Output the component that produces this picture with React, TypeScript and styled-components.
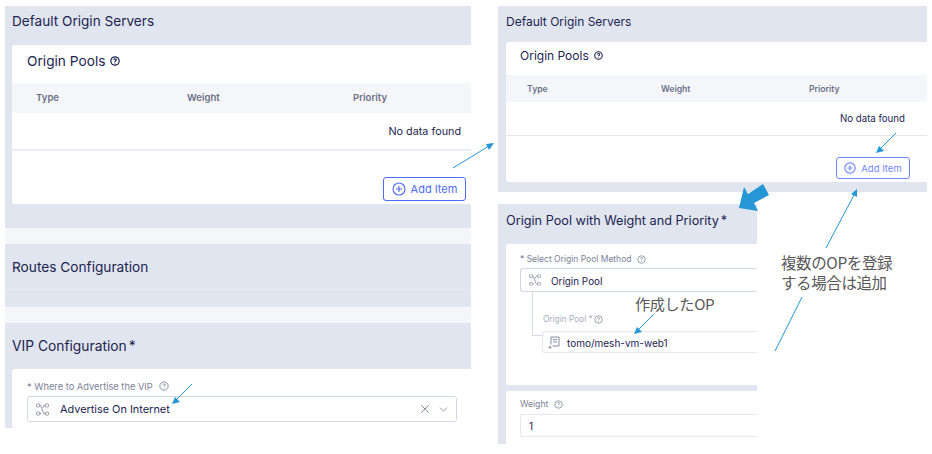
import React from 'react'
import styled, { createGlobalStyle } from 'styled-components'
import { ChevronDown, X } from 'lucide-react'

const LAVENDER = '#e1e5f0'
const INK = '#1c2450'
const BLUE = '#4d6bff'
const ARROW = '#2497d4'

const GlobalStyle = createGlobalStyle`
  html, body {
    margin: 0;
    padding: 0;
    background: #fff;
  }
  body {
    font-family: Inter, "Noto Sans", sans-serif;
    color: ${INK};
  }
`

const Page = styled.div`
  position: relative;
  width: 932px;
  height: 454px;
  overflow: hidden;
  display: flex;
  align-items: flex-start;
  gap: 27px;
  padding: 6px 0 0 5px;
  box-sizing: border-box;
`

const LeftShot = styled.div`
  width: 466px;
  height: 422px;
  display: flex;
  flex-direction: column;
  overflow: hidden;
`

const RightShot = styled.div`
  width: 429px;
  display: flex;
  flex-direction: column;
  gap: 12px;
`

const Band = styled.section<{ $height: number; $pad?: number; $width?: number }>`
  height: ${(p) => p.$height}px;
  width: ${(p) => (p.$width ? `${p.$width}px` : 'auto')};
  background: ${LAVENDER};
  padding-left: ${(p) => p.$pad ?? 7}px;
  box-sizing: border-box;
  flex: none;
  overflow: hidden;
`

const BandRule = styled.div`
  height: 1px;
  margin-left: -7px;
  background: #e8ebf4;
`

const Spacer = styled.div<{ $height: number }>`
  height: ${(p) => p.$height}px;
  background: #f5f6f9;
  flex: none;
`

const BandTitle = styled.h2<{ $size: number; $height: number; $lift: number }>`
  margin: 0;
  font-size: ${(p) => p.$size}px;
  font-weight: 400;
  height: ${(p) => p.$height}px;
  padding-bottom: ${(p) => p.$lift}px;
  box-sizing: border-box;
  display: flex;
  align-items: center;
  color: ${INK};
`

const Star = styled.span`
  margin-left: 2px;
`

const Card = styled.div<{ $height: number; $gap?: number }>`
  height: ${(p) => p.$height}px;
  margin-bottom: ${(p) => p.$gap ?? 0}px;
  background: #fff;
  border-radius: 3px 0 0 3px;
  overflow: hidden;
  position: relative;
  box-sizing: border-box;
`

const CardHead = styled.div<{ $size: number; $height: number; $pad: number; $lift: number }>`
  height: ${(p) => p.$height}px;
  padding: 0 0 ${(p) => p.$lift}px ${(p) => p.$pad}px;
  box-sizing: border-box;
  display: flex;
  align-items: center;
  gap: 5px;
  font-size: ${(p) => p.$size}px;
`

const TableHead = styled.div<{ $height: number; $size: number; $columns: string; $lift?: number }>`
  height: ${(p) => p.$height}px;
  padding-bottom: ${(p) => p.$lift ?? 0}px;
  box-sizing: border-box;
  background: #f5f6f9;
  display: grid;
  grid-template-columns: ${(p) => p.$columns};
  align-items: center;
  font-size: ${(p) => p.$size}px;
  font-weight: 600;
  color: #6a7088;
`

const EmptyRow = styled.div<{ $height: number; $size: number; $pad: number; $thick?: boolean }>`
  height: ${(p) => p.$height}px;
  border-bottom: ${(p) => (p.$thick ? '2px solid #e9ebf6' : '1px solid #e3e6f0')};
  box-sizing: border-box;
  display: flex;
  align-items: center;
  justify-content: flex-end;
  padding-right: ${(p) => p.$pad}px;
  font-size: ${(p) => p.$size}px;
`

const ActionRow = styled.div<{ $top: number; $pad: number }>`
  display: flex;
  justify-content: flex-end;
  padding: ${(p) => p.$top}px ${(p) => p.$pad}px 0 0;
`

const AddButton = styled.div<{ $width: number; $height: number; $size: number; $light?: boolean }>`
  width: ${(p) => p.$width}px;
  height: ${(p) => p.$height}px;
  box-sizing: border-box;
  border: ${(p) => (p.$light ? '1px solid #6f88ff' : `1.4px solid ${BLUE}`)};
  border-radius: 3px;
  display: flex;
  align-items: center;
  justify-content: center;
  gap: 5px;
  font-size: ${(p) => p.$size}px;
  color: ${(p) => (p.$light ? '#6f88ff' : BLUE)};
`

const FieldBlock = styled.div<{ $pad: number; $top: number }>`
  padding: ${(p) => p.$top}px 0 0 ${(p) => p.$pad}px;
`

const FieldLabel = styled.div<{ $size: number; $muted?: boolean }>`
  display: flex;
  align-items: center;
  gap: ${(p) => (p.$muted ? 1 : 6)}px;
  height: 14px;
  font-size: ${(p) => p.$size}px;
  color: ${(p) => (p.$muted ? '#a6abbd' : '#7b8196')};
`

const SelectBox = styled.div<{
  $width?: number
  $height: number
  $top: number
  $inset?: number
  $open?: boolean
  $soft?: boolean
  $size: number
  $textGap: number
}>`
  width: ${(p) => (p.$width ? `${p.$width}px` : 'auto')};
  height: ${(p) => p.$height}px;
  box-sizing: border-box;
  margin-top: ${(p) => p.$top}px;
  padding-left: ${(p) => p.$inset ?? 8}px;
  display: flex;
  align-items: center;
  gap: ${(p) => p.$textGap}px;
  background: #fff;
  border: ${(p) => (p.$soft ? '1px solid #e6e8f1' : '1.5px solid #d3d7e8')};
  border-right: ${(p) => (p.$open ? 'none' : undefined)};
  border-radius: ${(p) => (p.$open ? '3px 0 0 3px' : '3px')};
  font-size: ${(p) => p.$size}px;
  color: ${INK};
`

const SelectText = styled.span<{ $drop?: boolean }>`
  flex: 1;
  padding-top: ${(p) => (p.$drop ? 1 : 0)}px;
`

const Controls = styled.span`
  display: flex;
  align-items: center;
  gap: 5px;
  padding-right: 6px;
  color: #848aa1;
`

const TreeBranch = styled.div`
  margin-left: 12px;
  padding: 0 0 0 10px;
  height: 61px;
  position: relative;
`

const TreeLine = styled.span`
  position: absolute;
  left: 0;
  top: 0;
  width: 10px;
  height: 43px;
  border-left: 1px solid #d6daea;
  border-bottom: 1px solid #d6daea;
`

const Note = styled.div<{ $left: number; $top: number; $size: number }>`
  position: absolute;
  left: ${(p) => p.$left}px;
  top: ${(p) => p.$top}px;
  font-family: "Noto Sans CJK JP", "Noto Sans", sans-serif;
  font-size: ${(p) => p.$size}px;
  line-height: 20px;
  letter-spacing: -0.4px;
  color: #595959;
  white-space: nowrap;
`

const Overlay = styled.svg`
  position: absolute;
  left: 0;
  top: 0;
  pointer-events: none;
`

const HelpIcon = ({ size = 10, color = '#7b8196', bold = false }: { size?: number; color?: string; bold?: boolean }) => (
  <svg width={size} height={size} viewBox="0 0 12 12" fill="none" stroke={color} strokeWidth={bold ? 1.5 : 1}>
    <circle cx="6" cy="6" r="5" />
    <path d="M4.5 4.7C4.6 3.8 5.2 3.3 6 3.3c.9 0 1.5.6 1.5 1.3 0 1.2-1.5 1.2-1.5 2.5" />
    <path d="M6 8.2v.8" />
  </svg>
)

const PlusCircle = ({ size, weight = 1.1 }: { size: number; weight?: number }) => (
  <svg width={size} height={size} viewBox="0 0 14 14" fill="none" stroke="currentColor" strokeWidth={weight}>
    <circle cx="7" cy="7" r="6" />
    <path d="M7 4v6M4 7h6" />
  </svg>
)

const RouteIcon = ({ size = 13 }: { size?: number }) => (
  <svg width={size} height={size} viewBox="0 0 14 14" fill="none" stroke="#8a90a6" strokeWidth="1">
    <rect x="0.5" y="1" width="3.6" height="3.2" rx="1" />
    <rect x="0.5" y="9.8" width="3.6" height="3.2" rx="1" />
    <rect x="9.9" y="1" width="3.6" height="3.2" rx="1" />
    <rect x="9.9" y="9.8" width="3.6" height="3.2" rx="1" />
    <path d="M4.1 2.6h0.8l3.4 8.8h1.6M4.1 11.4h1.6M7.4 5.2l0.9-2.6h1.6" />
  </svg>
)

const ListIcon = () => (
  <svg width="12" height="13" viewBox="0 0 12 13" fill="none" stroke="#7b8196" strokeWidth="0.9">
    <path d="M3 8.5V1h8v9H4.5" />
    <path d="M5 3.6h4M5 6h4" />
    <path d="M0.5 11.3h3M2 9.8v3" />
  </svg>
)

const Line = ({ d, head }: { d: string; head: string }) => (
  <>
    <path d={d} fill="none" stroke={ARROW} strokeWidth="1" />
    <polygon points={head} fill={ARROW} />
  </>
)

export default function App() {
  return (
    <Page>
      <GlobalStyle />
      <LeftShot>
        <Band $height={222}>
          <BandTitle $size={13.6} $height={39} $lift={9}>Default Origin Servers</BandTitle>
          <Card $height={159}>
            <CardHead $size={13.7} $height={38} $pad={15} $lift={6}>
              Origin Pools <HelpIcon size={10} color={INK} bold />
            </CardHead>
            <TableHead $height={30} $lift={1} $size={9.6} $columns="24px 151px 166px 1fr">
              <span />
              <span>Type</span>
              <span>Weight</span>
              <span>Priority</span>
            </TableHead>
            <EmptyRow $height={38} $size={10.8} $pad={10} $thick>No data found</EmptyRow>
            <ActionRow $top={26} $pad={5}>
              <AddButton $width={83} $height={24} $size={11}>
                <PlusCircle size={14} />
                Add Item
              </AddButton>
            </ActionRow>
          </Card>
        </Band>
        <Spacer $height={16} />
        <Band $height={63}>
          <BandTitle $size={13.7} $height={45} $lift={0}>Routes Configuration</BandTitle>
          <BandRule />
        </Band>
        <Spacer $height={16} />
        <Band $height={105}>
          <BandTitle $size={13.8} $height={46} $lift={0}>
            VIP Configuration<Star>*</Star>
          </BandTitle>
          <Card $height={59}>
            <FieldBlock $pad={15} $top={10}>
              <FieldLabel $size={9.3}>
                * Where to Advertise the VIP <HelpIcon size={10} />
              </FieldLabel>
              <SelectBox $width={430} $height={26} $top={3} $size={10.9} $textGap={11}>
                <RouteIcon />
                <SelectText>Advertise On Internet</SelectText>
                <Controls>
                  <X size={14} strokeWidth={1.6} />
                  <ChevronDown size={13} strokeWidth={1.6} />
                </Controls>
              </SelectBox>
            </FieldBlock>
          </Card>
        </Band>
      </LeftShot>

      <RightShot>
        <Band $height={186} $pad={8}>
          <BandTitle $size={12} $height={36} $lift={6}>Default Origin Servers</BandTitle>
          <Card $height={140}>
            <CardHead $size={12} $height={33} $pad={14} $lift={7}>
              Origin Pools <HelpIcon size={9} color={INK} bold />
            </CardHead>
            <TableHead $height={27} $size={8.6} $columns="21px 134px 148px 1fr">
              <span />
              <span>Type</span>
              <span>Weight</span>
              <span>Priority</span>
            </TableHead>
            <EmptyRow $height={34} $size={9.7} $pad={22}>No data found</EmptyRow>
            <ActionRow $top={21} $pad={17}>
              <AddButton $width={74} $height={22} $size={9.5} $light>
                <PlusCircle size={12} weight={1.4} />
                Add Item
              </AddButton>
            </ActionRow>
          </Card>
        </Band>
        <Band $height={240} $pad={8} $width={259}>
          <BandTitle $size={12.7} $height={40} $lift={8}>
            Origin Pool with Weight and Priority<Star>*</Star>
          </BandTitle>
          <Card $height={141} $gap={6}>
            <FieldBlock $pad={14} $top={8}>
              <FieldLabel $size={8.5}>
                * Select Origin Pool Method <HelpIcon size={9} />
              </FieldLabel>
              <SelectBox $height={24} $top={2} $open $size={9.9} $textGap={10}>
                <RouteIcon size={12} />
                <SelectText $drop>Origin Pool</SelectText>
              </SelectBox>
              <TreeBranch>
                <TreeLine />
                <FieldBlock $pad={1} $top={20}>
                  <FieldLabel $size={8.3} $muted>
                    Origin Pool *<HelpIcon size={9} />
                  </FieldLabel>
                </FieldBlock>
                <SelectBox $height={22} $top={5} $inset={5} $open $soft $size={10} $textGap={7}>
                  <ListIcon />
                  <SelectText $drop>tomo/mesh-vm-web1</SelectText>
                </SelectBox>
              </TreeBranch>
            </FieldBlock>
          </Card>
          <Card $height={60}>
            <FieldBlock $pad={14} $top={6}>
              <FieldLabel $size={8.6}>
                Weight <HelpIcon size={9} />
              </FieldLabel>
              <SelectBox $height={23} $top={3} $open $soft $size={10} $textGap={0}>
                1
              </SelectBox>
            </FieldBlock>
          </Card>
        </Band>
      </RightShot>

      <Overlay width={932} height={454}>
        <Line d="M453 168L489 146" head="494,143 486,144 489,150" />
        <Line d="M896 133L880 149" head="876,153 884,151 879,146" />
        <Line d="M192 384L176 400" head="172,404 180,402 175,397" />
        <Line d="M654 314L638 330" head="634,334 642,332 637,327" />
        <Line d="M826 248L854 195" head="857,189 851,194 857,197" />
        <path d="M802 297L775 351" fill="none" stroke={ARROW} strokeWidth="1" />
        <polygon points="739,208 744,187 748,194 763,184 769,195 754,203 758,211" fill={ARROW} />
      </Overlay>
      <Note $left={635} $top={293} $size={15.2}>作成したOP</Note>
      <Note $left={781} $top={252} $size={15.5}>複数のOPを登録<br />する場合は追加</Note>
    </Page>
  )
}
